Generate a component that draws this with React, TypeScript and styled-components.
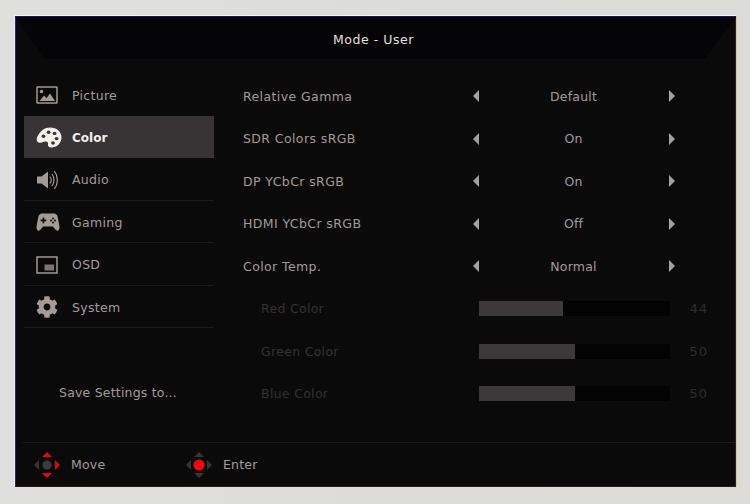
import React from "react";
import styled, { createGlobalStyle } from "styled-components";
import { FaCog } from "react-icons/fa";

const GlobalStyle = createGlobalStyle`
  html, body {
    margin: 0;
    padding: 0;
    background: #dcdddb;
  }
  * {
    box-sizing: border-box;
  }
`;

interface IMenu {
  name: string;
  icon: React.ReactNode;
}

interface ISetting {
  name: string;
  value: string;
}

interface ISlider {
  name: string;
  value: number;
}

const PictureIcon = () => (
  <svg width="22" height="18" viewBox="0 0 22 18">
    <rect x="1" y="1" width="20" height="16" fill="none" stroke="currentColor" strokeWidth="1.5" rx="0.5" />
    <circle cx="5.5" cy="5.5" r="1.7" fill="currentColor" />
    <path d="M3.5 15 L8 9.5 L10.5 12 L14 7.5 L19 15 Z" fill="currentColor" />
  </svg>
);

const PaletteIcon = () => (
  <svg width="26" height="21" viewBox="0 0 26 21">
    <path
      fill="currentColor"
      d="M14 0.5 C20.5 0.5 25.5 4.5 25.5 10.5 C25.5 16.5 20.5 20.5 15.5 20.5 C12.5 20.5 11.6 19 12 17.2 C12.4 15.4 11.4 14.2 9.2 14.4 C6.8 14.6 4.6 16.4 2.6 15.6 C0.4 14.6 0.2 11.6 2 8.6 C4.4 4 8.6 0.5 14 0.5 Z"
    />
    <ellipse cx="7.5" cy="9.2" rx="1.9" ry="1.7" fill="#383334" />
    <ellipse cx="12.6" cy="5.2" rx="1.9" ry="1.7" fill="#383334" />
    <ellipse cx="18.6" cy="6.4" rx="1.9" ry="1.7" fill="#383334" />
    <ellipse cx="20.6" cy="11.6" rx="1.9" ry="1.7" fill="#383334" />
    <ellipse cx="17" cy="16" rx="1.9" ry="1.7" fill="#383334" />
  </svg>
);

const AudioIcon = () => (
  <svg width="24" height="22" viewBox="0 0 24 22" fill="none">
    <path d="M1 7.5 H5.5 L12 2.5 V19.5 L5.5 14.5 H1 Z" fill="currentColor" />
    <path d="M14 7.5 C15.4 9.5 15.4 12.5 14 14.5" stroke="currentColor" strokeWidth="1.2" />
    <path d="M16 5 C18.6 8.5 18.6 13.5 16 17" stroke="currentColor" strokeWidth="1.2" />
    <path d="M18.4 2 C22.4 7.5 22.4 14.5 18.4 20" stroke="currentColor" strokeWidth="1.2" />
  </svg>
);

const GamepadIcon = () => (
  <svg width="24" height="20" viewBox="0 0 24 20">
    <path
      fill="currentColor"
      fillRule="evenodd"
      d="M6 1.5 H18 C20 1.5 21.2 3 21.7 5 L23.4 14 C23.9 17 22.6 18.8 21.2 18.8 C19.8 18.8 18.4 16.6 17 14.6 H7 C5.6 16.6 4.2 18.8 2.8 18.8 C1.4 18.8 0.1 17 0.6 14 L2.3 5 C2.8 3 4 1.5 6 1.5 Z
         M6.6 5.6 V7.6 H4.6 V9.2 H6.6 V11.2 H8.2 V9.2 H10.2 V7.6 H8.2 V5.6 Z"
    />
    <circle cx="15" cy="8.4" r="1" fill="#0b0a0b" />
    <circle cx="17" cy="6.4" r="1" fill="#0b0a0b" />
    <circle cx="19" cy="8.4" r="1" fill="#0b0a0b" />
    <circle cx="17" cy="10.4" r="1" fill="#0b0a0b" />
  </svg>
);

const OsdIcon = () => (
  <svg width="22" height="18" viewBox="0 0 22 18">
    <rect x="1" y="1" width="20" height="16" fill="none" stroke="currentColor" strokeWidth="1.5" />
    <rect x="8.5" y="8.5" width="9.5" height="6" fill="currentColor" opacity="0.75" />
  </svg>
);

const DPad = ({ move }: { move: boolean }) => {
  const on = "#e2090f";
  const off = "#363334";
  const vertical = move ? on : off;
  return (
    <svg width="28" height="28" viewBox="0 0 28 28">
      <path d="M14 1 L19 6 H9 Z" fill={vertical} />
      <path d="M14 27 L19 22 H9 Z" fill={vertical} />
      <path d="M1 14 L6 9 V19 Z" fill={off} />
      <path d="M27 14 L22 9 V19 Z" fill={move ? on : off} />
      {move ? <circle cx="14" cy="14" r="4.6" fill="#3d3a3b" /> : <circle cx="14" cy="14" r="5.6" fill="#f00a10" />}
    </svg>
  );
};

const menus: IMenu[] = [
  { name: "Picture", icon: <PictureIcon /> },
  { name: "Color", icon: <PaletteIcon /> },
  { name: "Audio", icon: <AudioIcon /> },
  { name: "Gaming", icon: <GamepadIcon /> },
  { name: "OSD", icon: <OsdIcon /> },
  { name: "System", icon: <FaCog size={22} /> },
];

const settings: ISetting[] = [
  { name: "Relative Gamma", value: "Default" },
  { name: "SDR Colors sRGB", value: "On" },
  { name: "DP YCbCr sRGB", value: "On" },
  { name: "HDMI YCbCr sRGB", value: "Off" },
  { name: "Color Temp.", value: "Normal" },
];

const sliders: ISlider[] = [
  { name: "Red Color", value: 44 },
  { name: "Green Color", value: 50 },
  { name: "Blue Color", value: 50 },
];

const App = () => {
  return (
    <Screen>
      <GlobalStyle />
      <Panel>
        <Header>Mode - User</Header>
        <Body>
          <Sidebar>
            <MenuList>
              {menus.map((menu) => (
                <MenuItem key={menu.name} $active={menu.name === "Color"}>
                  <MenuIcon>{menu.icon}</MenuIcon>
                  {menu.name}
                </MenuItem>
              ))}
            </MenuList>
            <SaveLabel>Save Settings to...</SaveLabel>
          </Sidebar>
          <Content>
            {settings.map((setting) => (
              <Row key={setting.name}>
                <RowLabel>{setting.name}</RowLabel>
                <Arrow $dir="left" />
                <RowValue>{setting.value}</RowValue>
                <Arrow $dir="right" />
              </Row>
            ))}
            {sliders.map((slider) => (
              <Row key={slider.name}>
                <SliderLabel>{slider.name}</SliderLabel>
                <Track>
                  <Fill style={{ width: `${slider.value}%` }} />
                </Track>
                <SliderValue>{slider.value}</SliderValue>
              </Row>
            ))}
          </Content>
        </Body>
        <Footer>
          <Hint $width={152}>
            <DPad move />
            Move
          </Hint>
          <Hint $width={120}>
            <DPad move={false} />
            Enter
          </Hint>
        </Footer>
      </Panel>
    </Screen>
  );
};

const fontStack = `"DejaVu Sans", "Liberation Sans", sans-serif`;

const Screen = styled.div`
  width: 750px;
  height: 504px;
  padding: 16px 14px 16px 15px;
  background: linear-gradient(90deg, #dfe0de, #dcdcda 50%, #dbdbd8);
  overflow: hidden;
  font-family: ${fontStack};
`;

const Panel = styled.div`
  width: 721px;
  height: 471px;
  display: flex;
  flex-direction: column;
  background: #0b0a0b;
  border-top: 1px solid #241060;
  border-left: 1px solid #1f1fb0;
  border-right: 1px solid #2a2320;
  border-bottom: 1px solid #2a1a20;
  box-shadow: 0 -1px 0 #f4f4f8, -1px 0 0 #f0f0f6, 1px 0 0 #dcc4a4;
`;

const Header = styled.div`
  height: 42px;
  margin: 0 -1px;
  padding: 2px 4px 0 0;
  display: flex;
  align-items: center;
  justify-content: center;
  background: #050406;
  color: #e6e2df;
  font-size: 12.5px;
  letter-spacing: 0.55px;
  clip-path: polygon(0 0, 100% 0, 690px 100%, 30px 100%);
`;

const Body = styled.div`
  flex: 1;
  display: flex;
  padding: 14px 0 0 8px;
  gap: 29px;
`;

const Sidebar = styled.div`
  width: 190px;
  display: flex;
  flex-direction: column;
`;

const MenuList = styled.div`
  display: grid;
  grid-auto-rows: 42.5px;
`;

const MenuItem = styled.div<{ $active: boolean }>`
  display: flex;
  align-items: center;
  padding: ${(props) => (props.$active ? "3px" : "2px")} 0 0 13px;
  background: ${(props) => (props.$active ? "#383334" : "transparent")};
  border-bottom: 1px solid ${(props) => (props.$active ? "transparent" : "#1b1a1a")};
  color: ${(props) => (props.$active ? "#f3efea" : "#a39b97")};
  font-size: ${(props) => (props.$active ? "12px" : "12.5px")};
  font-weight: ${(props) => (props.$active ? 700 : 400)};
  letter-spacing: ${(props) => (props.$active ? "0" : "0.3px")};

  &:first-child {
    border-bottom: none;
  }
`;

const MenuIcon = styled.span`
  width: 36px;
  margin-left: -1px;
  display: flex;
  align-items: center;
`;

const SaveLabel = styled.div`
  margin-top: 56px;
  padding-left: 35px;
  color: #a39b97;
  font-size: 12.5px;
  letter-spacing: 0.2px;
  line-height: 18px;
`;

const Content = styled.div`
  width: 470px;
  padding-top: 2px;
  display: grid;
  grid-auto-rows: 42.5px;
  align-content: start;
`;

const Row = styled.div`
  display: flex;
  align-items: center;
`;

const RowLabel = styled.div`
  width: 230px;
  color: #a39b97;
  font-size: 12.5px;
  letter-spacing: 0.4px;
`;

const RowValue = styled.div`
  width: 190px;
  padding-right: 1px;
  text-align: center;
  color: #a39b97;
  font-size: 12.5px;
  letter-spacing: 0.2px;
`;

const Arrow = styled.span<{ $dir: "left" | "right" }>`
  width: 0;
  height: 0;
  border-top: 6px solid transparent;
  border-bottom: 6px solid transparent;
  border-left: ${(props) => (props.$dir === "right" ? "6px solid #a6a0a0" : "0")};
  border-right: ${(props) => (props.$dir === "left" ? "6px solid #a6a0a0" : "0")};
`;

const SliderLabel = styled.div`
  width: 236px;
  padding-left: 18px;
  color: #343131;
  font-size: 12.5px;
  letter-spacing: 0.3px;
`;

const Track = styled.div`
  width: 191px;
  height: 15px;
  background: #040304;
`;

const Fill = styled.div`
  height: 100%;
  background: #3d3839;
`;

const SliderValue = styled.div`
  width: 38px;
  text-align: right;
  color: #2f2c2c;
  font-size: 13px;
  letter-spacing: 1px;
`;

const Footer = styled.div`
  height: 44px;
  margin-left: 7px;
  border-top: 1px solid #1d1c1c;
  display: flex;
  align-items: center;
  padding-left: 10px;
`;

const Hint = styled.div<{ $width: number }>`
  width: ${(props) => props.$width}px;
  display: flex;
  align-items: center;
  gap: 10px;
  color: #a39b97;
  font-size: 12.5px;
  letter-spacing: 0.2px;
`;

export default App;
